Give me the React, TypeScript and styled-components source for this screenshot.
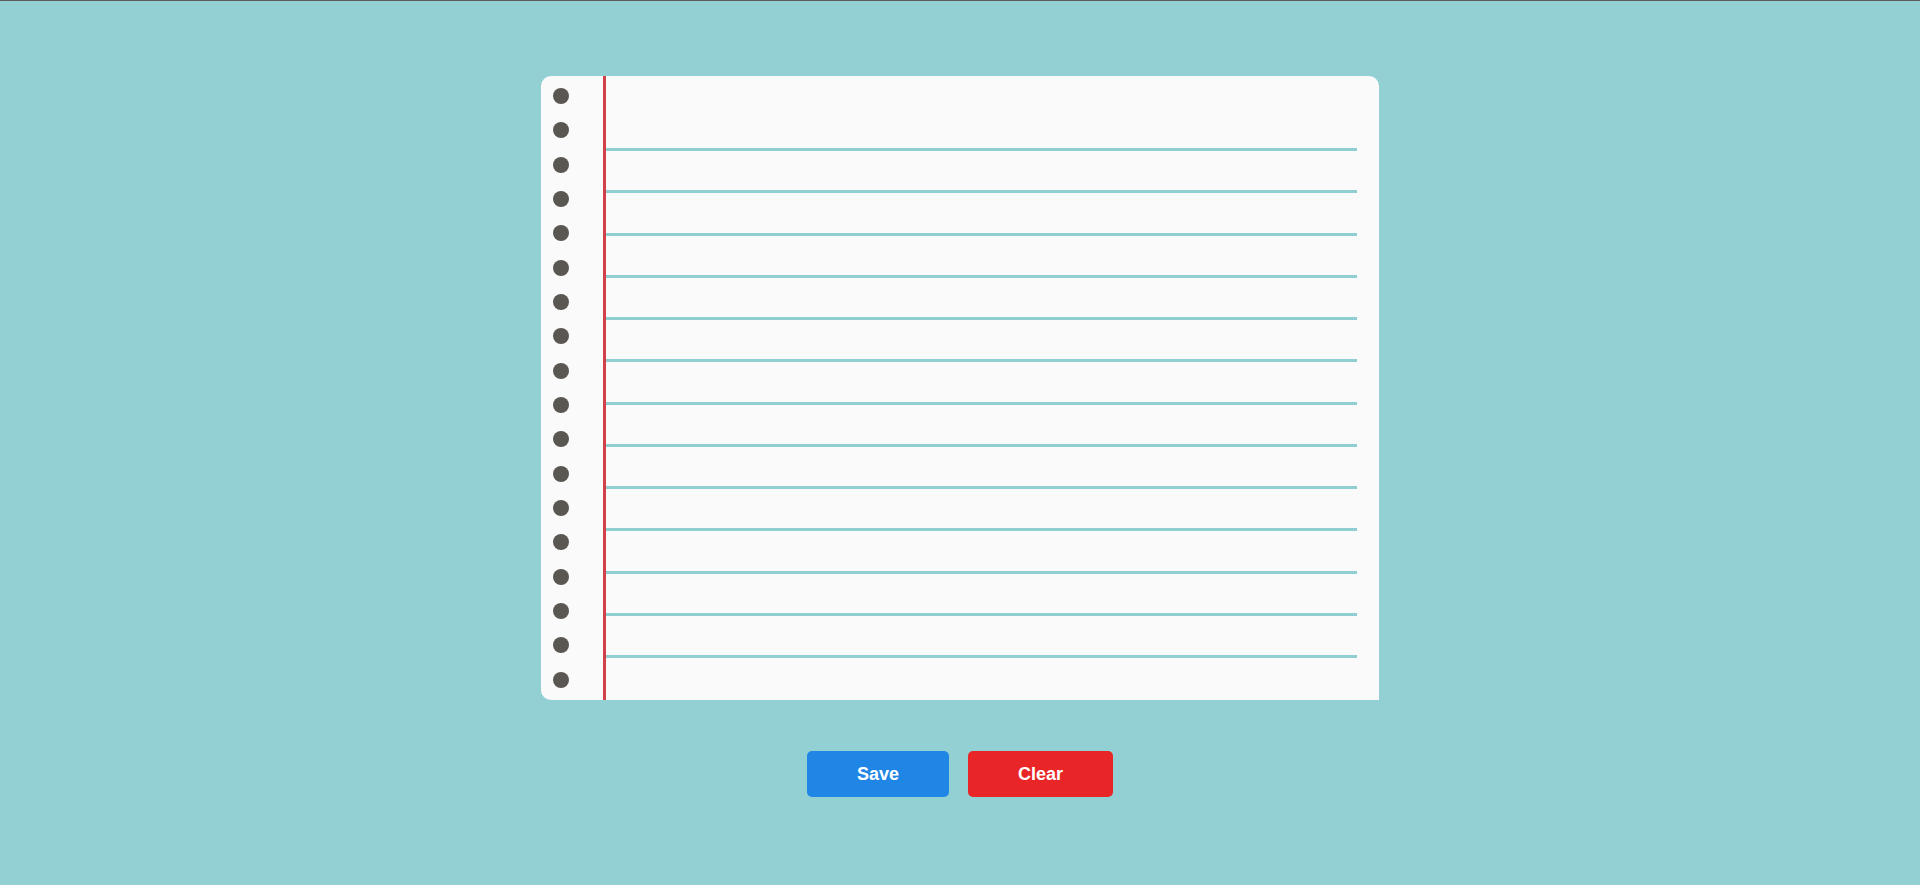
import React from "react";
import styled, { createGlobalStyle } from "styled-components";

const GlobalStyle = createGlobalStyle`
  html, body {
    margin: 0;
    padding: 0;
    background: #93d0d3;
  }
  body {
    font-family: "Liberation Sans", Arial, sans-serif;
  }
`;

const Page = styled.div`
  min-height: 885px;
  box-sizing: border-box;
  border-top: 1px solid #5b5b5b;
  background: #93d0d3;
  display: flex;
  flex-direction: column;
  align-items: center;
  padding-top: 75px;
`;

const Paper = styled.div`
  width: 838px;
  height: 624px;
  background: #fafafa;
  border-radius: 10px 10px 0 10px;
  display: flex;
  flex-direction: row;
  overflow: hidden;
`;

const HoleColumn = styled.div`
  width: 62px;
  box-sizing: border-box;
  padding: 12px 0 0 12.3px;
  display: flex;
  flex-direction: column;
  gap: 18.33px;
`;

const Hole = styled.div`
  width: 16px;
  height: 16px;
  border-radius: 50%;
  background: #5a5651;
`;

const MarginLine = styled.div`
  width: 3px;
  align-self: stretch;
  background: #d2414a;
`;

const LinedArea = styled.div`
  flex: 1;
  box-sizing: border-box;
  padding: 72px 22px 0 0;
  display: flex;
  flex-direction: column;
  gap: 39.25px;
`;

const Rule = styled.div`
  height: 3px;
  background: #8fcfd1;
`;

const ButtonRow = styled.div`
  margin-top: 51px;
  display: flex;
  gap: 19px;
`;

const ActionButton = styled.button<{ $bg: string; $w: number }>`
  width: ${(p) => p.$w}px;
  height: 46px;
  border: none;
  border-radius: 5px;
  background: ${(p) => p.$bg};
  color: #ffffff;
  font-family: "Liberation Sans", Arial, sans-serif;
  font-weight: 700;
  font-size: 18px;
  cursor: pointer;
  padding: 0;
`;

export default function App() {
  const holes = Array.from({ length: 18 });
  const rules = Array.from({ length: 13 });
  return (
    <>
      <GlobalStyle />
      <Page>
        <Paper>
          <HoleColumn>
            {holes.map((_, i) => (
              <Hole key={i} />
            ))}
          </HoleColumn>
          <MarginLine />
          <LinedArea>
            {rules.map((_, i) => (
              <Rule key={i} />
            ))}
          </LinedArea>
        </Paper>
        <ButtonRow>
          <ActionButton $bg="#1f86e6" $w={142}>Save</ActionButton>
          <ActionButton $bg="#e82627" $w={145}>Clear</ActionButton>
        </ButtonRow>
      </Page>
    </>
  );
}
